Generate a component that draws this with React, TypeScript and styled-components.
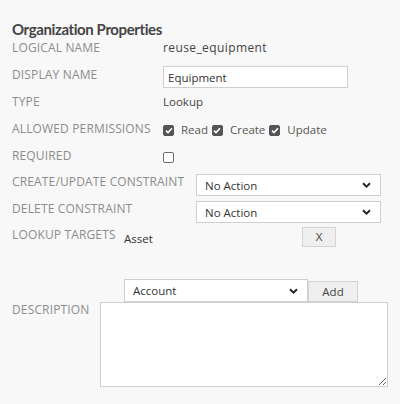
import styled, { createGlobalStyle } from "styled-components";

type LabelProps = {
  $width?: number;
};
type RowProps = {
  $height?: number;
};

const GlobalStyle = createGlobalStyle`
  html, body {
    margin: 0;
    padding: 0;
    background: #f8f8f8;
  }
  body {
    font-family: "Open Sans", "Noto Sans", sans-serif;
    font-size: 12px;
    color: #444;
  }
`;

const Panel = styled.div`
  width: 400px;
  height: 404px;
  padding: 19px 0 0 12px;
  box-sizing: border-box;
  background: #f8f8f8;
`;
const Title = styled.h2`
  margin: 0 0 1px;
  font-family: "Lato", "Open Sans", sans-serif;
  font-size: 15px;
  line-height: 20px;
  font-weight: 700;
  color: #444;
  letter-spacing: -0.4px;
`;
const Row = styled.div<RowProps>`
  display: flex;
  align-items: flex-start;
  height: ${(p) => (p.$height ? `${p.$height}px` : "auto")};
`;
const Label = styled.div<LabelProps>`
  flex: none;
  width: ${(p) => (p.$width ? `${p.$width}px` : "auto")};
  margin-right: 10px;
  color: #8c8c8c;
  font-size: 12px;
  line-height: 16px;
  letter-spacing: 0.15px;
  white-space: nowrap;
`;
const Value = styled.div`
  color: #444;
  font-size: 11.5px;
  line-height: 16px;
`;
const WideValue = styled(Value)`
  font-size: 12px;
  letter-spacing: 0.4px;
`;
const TextInput = styled.input`
  width: 185px;
  height: 22px;
  box-sizing: border-box;
  margin-top: -1px;
  padding: 0 4px;
  border: 1px solid #cfcfcf;
  background: #fff;
  font-family: inherit;
  font-size: 11.5px;
  color: #333;
  outline: none;
`;
const Checks = styled.div`
  display: flex;
  align-items: center;
  height: 16px;
  padding-top: 1px;
`;
const Box = styled.span<{ $checked?: boolean }>`
  display: inline-flex;
  align-items: center;
  justify-content: center;
  width: 11px;
  height: 11px;
  box-sizing: border-box;
  border-radius: 2px;
  border: 1px solid ${(p) => (p.$checked ? "#555" : "#6d6d6d")};
  background: ${(p) => (p.$checked ? "#555" : "#fff")};
`;
const CheckText = styled.span`
  margin: 0 4px 0 7px;
  color: #555;
  font-size: 11.5px;
  line-height: 16px;
`;
const SelectBox = styled.div<{ $width: number; $height?: number }>`
  display: flex;
  align-items: center;
  justify-content: space-between;
  width: ${(p) => p.$width}px;
  height: ${(p) => p.$height ?? 22}px;
  box-sizing: border-box;
  padding: 0 9px 0 8px;
  border: 1px solid #cfcfcf;
  background: #fff;
  color: #333;
  font-size: 11.5px;
`;
const Targets = styled.div`
  display: flex;
  flex-direction: column;
`;
const TargetItem = styled.div`
  display: flex;
  align-items: center;
  height: 20px;
  margin-bottom: 32px;
`;
const TargetName = styled.span`
  width: 178px;
  padding-top: 3px;
  color: #333;
  font-size: 11.5px;
`;
const Button = styled.button<{ $width: number; $height: number }>`
  width: ${(p) => p.$width}px;
  height: ${(p) => p.$height}px;
  padding: 0;
  border: 1px solid #d4d4d4;
  background: #efefef;
  color: #444;
  font-family: inherit;
  font-size: 11.5px;
  line-height: 1;
`;
const AddRow = styled.div`
  display: flex;
  align-items: flex-end;
`;
const TextArea = styled.textarea`
  width: 288px;
  height: 85px;
  box-sizing: border-box;
  border: 1px solid #cfcfcf;
  background: #fff;
  font-family: inherit;
  font-size: 12px;
  margin: 0;
  outline: none;
`;

const Check = () => (
  <svg width="8" height="7" viewBox="0 0 8 7">
    <path d="M1 3.6 L3 5.5 L7 1.2" fill="none" stroke="#fff" strokeWidth="1.6" />
  </svg>
);
const Chevron = () => (
  <svg width="9" height="6" viewBox="0 0 9 6">
    <path d="M1 1.2 L4.5 4.6 L8 1.2" fill="none" stroke="#222" strokeWidth="1.9" />
  </svg>
);

const App = () => {
  return (
    <>
      <GlobalStyle />
      <Panel>
        <Title>Organization Properties</Title>
        <Row $height={27}>
          <Label $width={141}>LOGICAL NAME</Label>
          <WideValue>reuse_equipment</WideValue>
        </Row>
        <Row $height={27}>
          <Label $width={141}>DISPLAY NAME</Label>
          <TextInput value="Equipment" readOnly />
        </Row>
        <Row $height={27}>
          <Label $width={141}>TYPE</Label>
          <Value>Lookup</Value>
        </Row>
        <Row $height={27}>
          <Label $width={141}>ALLOWED PERMISSIONS</Label>
          <Checks>
            <Box $checked>
              <Check />
            </Box>
            <CheckText>Read</CheckText>
            <Box $checked>
              <Check />
            </Box>
            <CheckText>Create</CheckText>
            <Box $checked>
              <Check />
            </Box>
            <CheckText>Update</CheckText>
          </Checks>
        </Row>
        <Row $height={26}>
          <Label $width={141}>REQUIRED</Label>
          <Checks>
            <Box />
          </Checks>
        </Row>
        <Row $height={27}>
          <Label $width={174}>CREATE/UPDATE CONSTRAINT</Label>
          <SelectBox $width={185}>
            <span>No Action</span>
            <Chevron />
          </SelectBox>
        </Row>
        <Row $height={26}>
          <Label $width={174}>DELETE CONSTRAINT</Label>
          <SelectBox $width={185}>
            <span>No Action</span>
            <Chevron />
          </SelectBox>
        </Row>
        <Row>
          <Label $width={102}>LOOKUP TARGETS</Label>
          <Targets>
            <TargetItem>
              <TargetName>Asset</TargetName>
              <Button $width={34} $height={20}>X</Button>
            </TargetItem>
            <AddRow>
              <SelectBox $width={184} $height={23}>
                <span>Account</span>
                <Chevron />
              </SelectBox>
              <Button $width={50} $height={21}>Add</Button>
            </AddRow>
          </Targets>
        </Row>
        <Row>
          <Label $width={78}>DESCRIPTION</Label>
          <TextArea />
        </Row>
      </Panel>
    </>
  );
};

export default App;
